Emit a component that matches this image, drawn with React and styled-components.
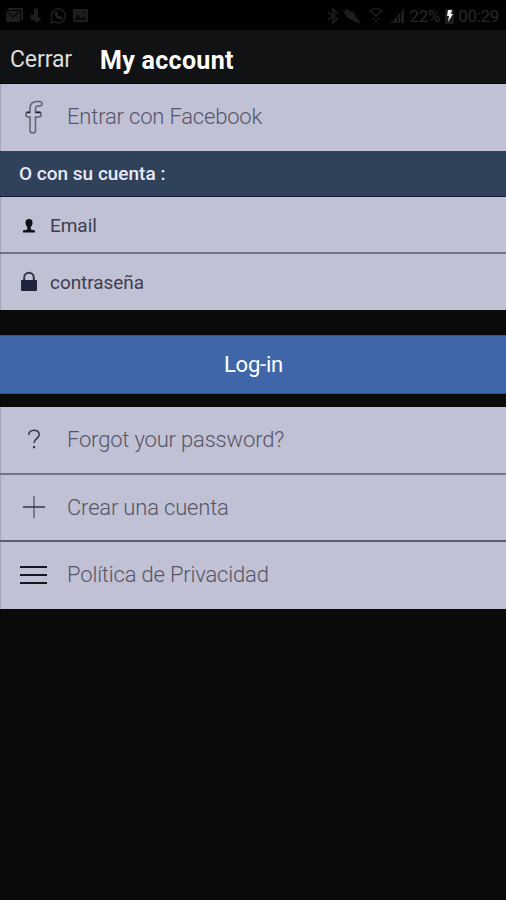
import React from 'react';
import styled, { createGlobalStyle } from 'styled-components';

const GlobalStyle = createGlobalStyle`
	* { box-sizing: border-box; }

	body {
		margin: 0;
		background-color: #0a0a0a;
		font-family: Roboto, "Liberation Sans", sans-serif;
	}
`;

const Screen = styled.div`
	display: flex;
	flex-direction: column;
	width: 100%;
	height: 900px;
	overflow: hidden;
	background-color: #0a0a0a;
	border-bottom: 1px solid #12060a;
`;

const StatusBar = styled.div`
	display: flex;
	flex: none;
	justify-content: space-between;
	height: 30px;
	padding: 2px 7px 0 6px;
	background-color: #010101;
	color: #1e1e1e;
`;

const StatusGroup = styled.div`
	display: flex;
	align-items: center;
	gap: ${props => props.$gap};
	font-size: 17px;
	line-height: 28px;

	svg { display: block; }
`;

const StatusText = styled.span`
	color: #282828;
	letter-spacing: -0.3px;
`;

const Header = styled.header`
	display: flex;
	flex: none;
	align-items: center;
	height: 54px;
	padding: 6px 10px 0;
	background-color: #111214;
	border-bottom: 1px solid #050507;
`;

const CloseButton = styled.div`
	width: 90px;
	color: #dedede;
	font-size: 23px;
	letter-spacing: -0.1px;
	cursor: pointer;
`;

const Title = styled.h1`
	margin: 0;
	padding-top: 1px;
	color: #fff;
	font-size: 25px;
	font-weight: 700;
	letter-spacing: 0.3px;
`;

const Row = styled.div`
	display: flex;
	flex: none;
	align-items: center;
	height: ${props => props.$height};
	padding: ${props => props.$drop || '0'} 0 ${props => props.$lift || '0'} 18px;
	background-color: #c1c1d5;
	border-bottom: ${props => props.$last ? 'none' : `2px solid ${props.$line || '#747487'}`};
	box-shadow: inset 2px 0 1px -1px #a5a5b8;
`;

const RowIcon = styled.div`
	display: flex;
	flex: none;
	justify-content: center;
	width: 31px;
	margin-right: 18px;

	svg { display: block; }
`;

const RowLabel = styled.div`
	color: #555567;
	font-size: 22px;
	font-weight: 300;
	letter-spacing: -0.18px;
	white-space: nowrap;
`;

const SectionTitle = styled.div`
	display: flex;
	flex: none;
	align-items: center;
	height: 46px;
	padding-left: 19px;
	background-color: #304259;
	border-bottom: 1px solid #101636;
	color: #e8eafa;
	font-size: 19px;
	font-weight: 500;
`;

const FieldIcon = styled.div`
	display: flex;
	justify-content: center;
	width: 22px;
	margin-right: 10px;

	svg { display: block; }
`;

const FieldLabel = styled.div`
	color: #3e3e4f;
	font-size: 19px;
	letter-spacing: -0.05px;
`;

const LoginButton = styled.div`
	display: flex;
	flex: none;
	align-items: center;
	justify-content: center;
	height: 59px;
	margin: 25px 0 13px;
	padding: 0 0 1px 1px;
	background-color: #3f66a9;
	border: solid #2157b4;
	border-width: 1px 0;
	color: #fff;
	font-size: 22px;
	letter-spacing: -0.2px;
	cursor: pointer;
`;

function StatusIcons() {
	return (
		<StatusGroup $gap="5px">
			<svg width="18" height="18" viewBox="0 0 18 18">
				<path d="M0 4h14v11H0zM2 1h15v12h-2V3H2z" fill="currentColor" />
				<path d="M1 5l6 5 6-5" fill="none" stroke="#080808" strokeWidth="1.3" />
			</svg>
			<svg width="15" height="18" viewBox="0 0 15 18">
				<path d="M5 2l4-1v10h4l-5 5-6-5h3z M2 7l3 1v5L1 12z" fill="currentColor" />
			</svg>
			<svg width="18" height="18" viewBox="0 0 18 18" fill="none" stroke="currentColor">
				<path d="M2 16l1-4A7 7 0 1 1 6 15z" strokeWidth="1.5" />
				<path d="M6 5c-1 4 3 8 7 7v-2l-2-1-1 1-2-2 1-1-1-2z" fill="currentColor" />
			</svg>
			<svg width="17" height="18" viewBox="0 0 17 18">
				<path d="M1 2h15v13H1z" fill="currentColor" />
				<path d="M2 13l4-6 3 4 3-2 3 4zM11 4h2v2h-2z" fill="#090909" />
			</svg>
		</StatusGroup>
	);
}

function StatusInfo() {
	return (
		<StatusGroup $gap="3px">
			<svg width="14" height="18" viewBox="0 0 14 18" fill="none" stroke="currentColor" strokeWidth="1.5">
				<path d="M2 5l9 7-4 4V2l4 4-9 7" />
			</svg>
			<svg width="18" height="18" viewBox="0 0 18 18" fill="none" stroke="currentColor" strokeWidth="2">
				<path d="M3 2l13 13" />
				<path d="M2 5h4l4 1 5 9-6-3-4-2z" fill="currentColor" />
			</svg>
			<svg width="22" height="18" viewBox="0 0 22 18" fill="none" stroke="currentColor" strokeWidth="1.5">
				<path d="M6 4c4-3 8-3 12 0l-6 5zM8 12h3M13 12h3M11 15h2" />
			</svg>
			<svg width="17" height="18" viewBox="0 0 17 18">
				<path d="M1 16l3-3v3zM5 16v-4l3-3v7zM9 16V8l2-2v10zM12 16V5l3-3v14z" fill="currentColor" />
			</svg>
			<StatusText>22%</StatusText>
			<svg width="12" height="18" viewBox="0 0 12 18">
				<rect x="2" y="2" width="9" height="15" rx="2" fill="currentColor" />
				<path d="M5 3h4L8 7h2l-5 8 1-6H4z" fill="#f2f2f2" />
			</svg>
			<StatusText>00:29</StatusText>
		</StatusGroup>
	);
}

const FacebookIcon = () => (
	<svg width="20" height="36" viewBox="0 0 20 36" fill="none" stroke="#60606f" strokeWidth="1.5">
		<path d="M6 31.500V18H4q-2 0-2-2.500T4 13h2V9.500C6 4.500 8.500 2.500 13 2.500h2.500q2.500 0 2.500 2.200T15.500 7H14q-2.500 0-2.500 3v3H15q2 0 2 2.500T15 18h-3.500v13.500q0 2.500-2.700 2.500T6 31.500z" />
		<path d="M2.800 13.500H6M11.500 13.500h5" stroke="#20202e" strokeWidth="1.600" />
	</svg>
);

const QuestionIcon = () => (
	<svg width="14" height="20" viewBox="0 0 14 20" fill="none" stroke="#333342" strokeWidth="1.500">
		<path d="M1.800 6C1.800-.4 12.200-.4 12.200 5.500c0 4-5.200 4.300-5.200 8.500" />
		<path d="M7 17v2.300" strokeWidth="2" />
	</svg>
);

const PlusIcon = () => (
	<svg width="22" height="22" viewBox="0 0 22 22" fill="none" strokeWidth="1.500">
		<path d="M11 0v22" stroke="#626273" />
		<path d="M0 11h22" stroke="#333342" />
	</svg>
);

const MenuIcon = () => (
	<svg width="27" height="20" viewBox="0 0 27 20" fill="none" stroke="#151520" strokeWidth="2.200">
		<path d="M0 2h27M0 10h27M0 18h27" />
	</svg>
);

const UserIcon = () => (
	<svg width="14" height="16" viewBox="0 0 14 16" fill="#101018">
		<path d="M7 1C4.500 1 3.500 2.300 3.500 4.500c0 2.200.8 3.500 1.800 4.500v2.500L1 12.500v2h12v-2l-4.300-1V9c1-1 1.800-2.300 1.800-4.500C10.500 2.300 9.500 1 7 1z" />
	</svg>
);

const LockIcon = () => (
	<svg width="18" height="22" viewBox="0 0 18 22">
		<path d="M4.200 10V6.500a4.800 4.800 0 0 1 9.600 0V10" fill="none" stroke="#343446" strokeWidth="2" />
		<rect x="1" y="9" width="16" height="11" rx=".8" fill="#20233c" />
	</svg>
);

export default function App() {
	return (
		<>
			<GlobalStyle />
			<Screen>
				<StatusBar>
					<StatusIcons />
					<StatusInfo />
				</StatusBar>
				<Header>
					<CloseButton>Cerrar</CloseButton>
					<Title>My account</Title>
				</Header>
				<Row $height="67px" $lift="2px" $last>
					<RowIcon><FacebookIcon /></RowIcon>
					<RowLabel>Entrar con Facebook</RowLabel>
				</Row>
				<SectionTitle>O con su cuenta :</SectionTitle>
				<Row $height="57px" $drop="2px">
					<FieldIcon><UserIcon /></FieldIcon>
					<FieldLabel>Email</FieldLabel>
				</Row>
				<Row $height="56px" $last>
					<FieldIcon><LockIcon /></FieldIcon>
					<FieldLabel>contraseña</FieldLabel>
				</Row>
				<LoginButton>Log-in</LoginButton>
				<Row $height="68px" $lift="2px">
					<RowIcon><QuestionIcon /></RowIcon>
					<RowLabel>Forgot your password?</RowLabel>
				</Row>
				<Row $height="67px" $lift="1px" $line="#5c5c70">
					<RowIcon><PlusIcon /></RowIcon>
					<RowLabel>Crear una cuenta</RowLabel>
				</Row>
				<Row $height="67px" $lift="2px" $last>
					<RowIcon><MenuIcon /></RowIcon>
					<RowLabel>Política de Privacidad</RowLabel>
				</Row>
			</Screen>
		</>
	);
}
